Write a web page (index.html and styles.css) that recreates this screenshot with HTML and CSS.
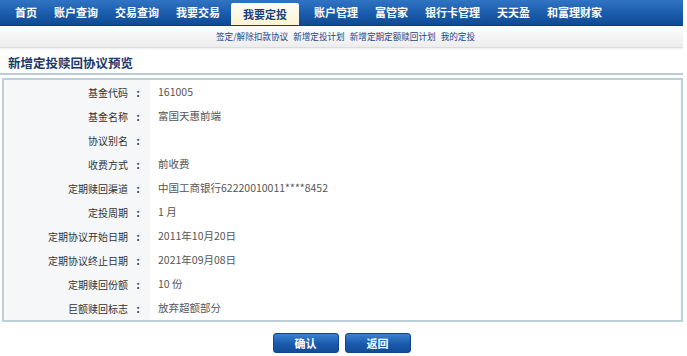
FILE: index.html
```html
<!DOCTYPE html>
<html lang="zh-cn">
  <head>
    <meta charset="UTF-8" />
    <title>新增定投赎回协议预览</title>
    <link rel="stylesheet" href="styles.css">
  </head>
  <body>
    <nav class="menu">
      <a class="item">首页</a>
      <a class="item">账户查询</a>
      <a class="item">交易查询</a>
      <a class="item">我要交易</a>
      <a class="item ativo">我要定投</a>
      <a class="item">账户管理</a>
      <a class="item">富管家</a>
      <a class="item">银行卡管理</a>
      <a class="item">天天盈</a>
      <a class="item">和富理财家</a>
    </nav>
    <div class="submenu">
      <a>签定/解除扣款协议</a>
      <a>新增定投计划</a>
      <a>新增定期定额赎回计划</a>
      <a>我的定投</a>
    </div>

    <h2 class="titulo">新增定投赎回协议预览</h2>

    <div class="quadro">
      <div class="linha"><span class="rotulo">基金代码</span><span class="sep">:</span><span class="valor">161005</span></div>
      <div class="linha"><span class="rotulo">基金名称</span><span class="sep">:</span><span class="valor">富国天惠前端</span></div>
      <div class="linha"><span class="rotulo">协议别名</span><span class="sep">:</span><span class="valor"></span></div>
      <div class="linha"><span class="rotulo">收费方式</span><span class="sep">:</span><span class="valor">前收费</span></div>
      <div class="linha"><span class="rotulo">定期赎回渠道</span><span class="sep">:</span><span class="valor">中国工商银行62220010011****8452</span></div>
      <div class="linha"><span class="rotulo">定投周期</span><span class="sep">:</span><span class="valor">1 月</span></div>
      <div class="linha"><span class="rotulo">定期协议开始日期</span><span class="sep">:</span><span class="valor">2011年10月20日</span></div>
      <div class="linha"><span class="rotulo">定期协议终止日期</span><span class="sep">:</span><span class="valor">2021年09月08日</span></div>
      <div class="linha"><span class="rotulo">定期赎回份额</span><span class="sep">:</span><span class="valor">10 份</span></div>
      <div class="linha"><span class="rotulo">巨额赎回标志</span><span class="sep">:</span><span class="valor">放弃超额部分</span></div>
    </div>

    <div class="botoes">
      <button>确认</button>
      <button>返回</button>
    </div>
  </body>
</html>
```

FILE: styles.css
```css
body {
  margin: 0;
  width: 683px;
  font-family: "Noto Sans CJK SC", "DejaVu Sans", sans-serif;
  font-size: 10px;
  line-height: 1.3;
  color: #333;
  background: #fff;
}

/* menu principal */
.menu {
  display: flex;
  gap: 17px;
  height: 26px;
  padding-left: 15px;
  background: linear-gradient(#3174c4, #1a5cab 55%, #0f4a93);
  border-bottom: 1px solid #0c3f80;
  box-sizing: border-box;
}

.menu .item {
  display: flex;
  align-items: center;
  color: #fff;
  font-weight: bold;
  font-size: 11px;
  white-space: nowrap;
}

.menu .item.ativo {
  justify-content: center;
  width: 68px;
  height: 22px;
  margin: 0 -2px 0 -6px;
  align-self: flex-end;
  background: linear-gradient(#fffdf5, #fff3d2);
  color: #1a3f78;
  border-radius: 2px 2px 0 0;
}

.submenu {
  display: flex;
  gap: 5px;
  height: 21px;
  align-items: center;
  padding-left: 216px;
  background: linear-gradient(#fdfdfd, #ededed);
  border-bottom: 1px solid #dcdcdc;
  box-shadow: 0 1px 2px rgba(0, 0, 0, 0.08);
  font-size: 8.6px;
}

.submenu a {
  color: #1a468a;
}

.titulo {
  margin: 7px 0 0;
  padding: 0 0 3px 8px;
  font-size: 12.5px;
  line-height: 15px;
  color: #1b3a6b;
  border-bottom: 2px solid #bccdd8;
}

/* quadro de dados */
.quadro {
  margin: 3px 0 0 2px;
  border: 2px solid #bcd0dc;
  padding: 0;
  background: linear-gradient(to right, #f6f7f8 146px, #fff 146px);
}

.linha {
  display: flex;
  height: 24px;
  align-items: center;
}

.rotulo {
  width: 124px;
  text-align: right;
  color: #333;
}

.sep {
  width: 20px;
  text-align: center;
  font-weight: bold;
  color: #333;
}

.valor {
  margin-left: 10px;
  font-size: 10.5px;
  color: #555;
}

.botoes {
  display: flex;
  justify-content: center;
  gap: 6px;
  margin-top: 11px;
}

.botoes button {
  width: 66px;
  height: 20px;
  border: 1px solid #12468a;
  border-radius: 3px;
  background: linear-gradient(#3b80cf, #1a5aad 55%, #124b95);
  color: #fff;
  font-family: "Noto Sans CJK SC", sans-serif;
  font-weight: bold;
  font-size: 11px;
  line-height: 1;
  padding: 0;
}
```
